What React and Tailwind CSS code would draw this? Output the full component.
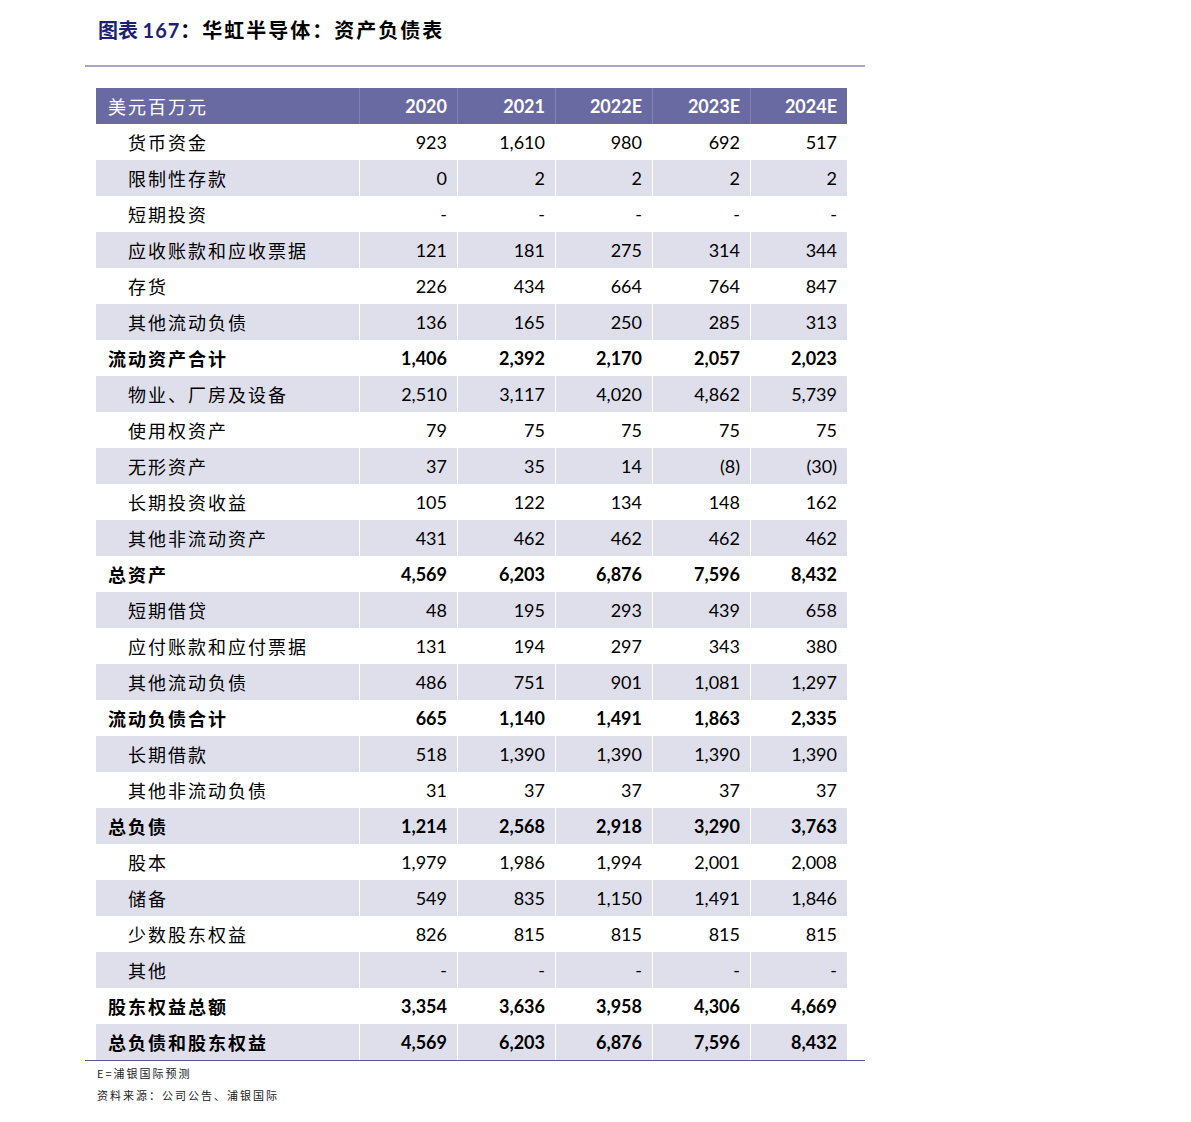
import React from "react";

const rows = [
  ["货币资金", ["923", "1,610", "980", "692", "517"]],
  ["限制性存款", ["0", "2", "2", "2", "2"]],
  ["短期投资", ["-", "-", "-", "-", "-"]],
  ["应收账款和应收票据", ["121", "181", "275", "314", "344"]],
  ["存货", ["226", "434", "664", "764", "847"]],
  ["其他流动负债", ["136", "165", "250", "285", "313"]],
  ["流动资产合计", ["1,406", "2,392", "2,170", "2,057", "2,023"], true],
  ["物业、厂房及设备", ["2,510", "3,117", "4,020", "4,862", "5,739"]],
  ["使用权资产", ["79", "75", "75", "75", "75"]],
  ["无形资产", ["37", "35", "14", "(8)", "(30)"]],
  ["长期投资收益", ["105", "122", "134", "148", "162"]],
  ["其他非流动资产", ["431", "462", "462", "462", "462"]],
  ["总资产", ["4,569", "6,203", "6,876", "7,596", "8,432"], true],
  ["短期借贷", ["48", "195", "293", "439", "658"]],
  ["应付账款和应付票据", ["131", "194", "297", "343", "380"]],
  ["其他流动负债", ["486", "751", "901", "1,081", "1,297"]],
  ["流动负债合计", ["665", "1,140", "1,491", "1,863", "2,335"], true],
  ["长期借款", ["518", "1,390", "1,390", "1,390", "1,390"]],
  ["其他非流动负债", ["31", "37", "37", "37", "37"]],
  ["总负债", ["1,214", "2,568", "2,918", "3,290", "3,763"], true],
  ["股本", ["1,979", "1,986", "1,994", "2,001", "2,008"]],
  ["储备", ["549", "835", "1,150", "1,491", "1,846"]],
  ["少数股东权益", ["826", "815", "815", "815", "815"]],
  ["其他", ["-", "-", "-", "-", "-"]],
  ["股东权益总额", ["3,354", "3,636", "3,958", "4,306", "4,669"], true],
  ["总负债和股东权益", ["4,569", "6,203", "6,876", "7,596", "8,432"], true],
];

const years = ["2020", "2021", "2022E", "2023E", "2024E"];
const grid = "grid grid-cols-[263px_98px_98px_97px_98px_97px] w-[751px] h-9";
const cjk = "font-['Noto_Sans_CJK_SC',sans-serif]";
const num = "font-['Lato','Noto_Sans',sans-serif]";

export default function App() {
  return (
    <div className="w-[1191px] h-[1122px] bg-white">
      <div className="pl-[98px] pt-[15px] h-[65px] text-[20px] font-bold text-black">
        <span className={`${cjk} text-[#1e1f78]`}>图表 </span>
        <span className={`${num} text-[#1e1f78] tracking-[1px]`}>167</span>
        <span className={`${cjk} tracking-[2px]`}>：华虹半导体：资产负债表</span>
      </div>
      <div className="ml-[85px] w-[780px] border-t-2 border-[#a9a5c9]" />
      <div className="pl-[96px] pt-[21px]">
        <div className={`${grid} bg-[#6a6aa3] text-white text-[18px] items-center`}>
          <div className={`${cjk} pl-3 tracking-[2px]`}>美元百万元</div>
          {years.map((y) => (
            <div key={y} className={`${num} font-bold text-right pr-[10px] border-l border-[#8282b3] h-full flex items-center justify-end`}>
              {y}
            </div>
          ))}
        </div>
        {rows.map(([label, vals, bold], i) => (
          <div
            key={i}
            className={`${grid} text-[18px] text-black ${i % 2 === 1 ? "bg-[#dfdfec]" : "bg-white"}`}
          >
            <div className={`${cjk} flex items-center tracking-[2px] ${bold ? "pl-3 font-bold" : "pl-8"}`}>{label}</div>
            {vals.map((v, j) => (
              <div
                key={j}
                className={`${num} flex items-center justify-end pr-[10px] border-l border-white ${bold ? "font-bold" : ""}`}
              >
                {v}
              </div>
            ))}
          </div>
        ))}
      </div>
      <div className="ml-[85px] w-[780px] border-t border-[#5b559e]" />
      <div className={`${cjk} pl-[97px] pt-[1px] text-[11px] text-[#222] leading-[22px] tracking-[2px]`}>
        <div>E=浦银国际预测</div>
        <div>资料来源：公司公告、浦银国际</div>
      </div>
    </div>
  );
}
